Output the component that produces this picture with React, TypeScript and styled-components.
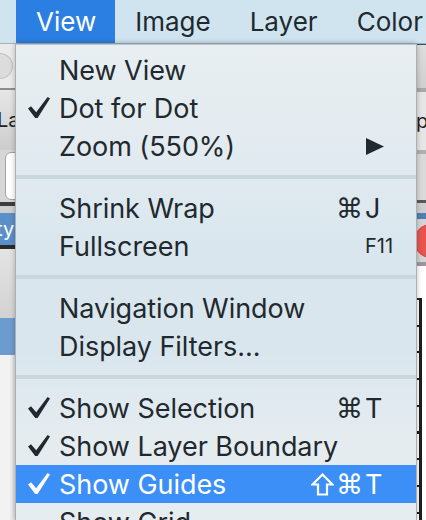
import React from "react";
import styled, { createGlobalStyle, css } from "styled-components";

const GlobalStyle = createGlobalStyle`
  html, body {
    margin: 0;
    padding: 0;
  }
  body {
    font-family: Inter, "Noto Sans", "DejaVu Sans", sans-serif;
    -webkit-font-smoothing: antialiased;
  }
`;

const Page = styled.div`
  width: 426px;
  height: 520px;
  overflow: hidden;
  display: flex;
  flex-direction: column;
  background: #e9e9e9;
`;

const MenuBar = styled.div`
  height: 43px;
  flex: none;
  display: flex;
  padding-left: 16px;
  background: #d0e4ef;
  border-bottom: 1px solid #9fb4c0;
`;

const BarItem = styled.div<{ $active?: boolean }>`
  display: flex;
  align-items: center;
  padding: 0 19px 0 20px;
  font-size: 26px;
  color: #1e2930;
  white-space: nowrap;
  ${(p) =>
    p.$active &&
    css`
      background: #2c7fe2;
      color: #ffffff;
    `}
`;

const Body = styled.div`
  flex: 1;
  display: flex;
  min-height: 0;
`;

const Edge = styled.div<{ $w: number }>`
  width: ${(p) => p.$w}px;
  flex: none;
  display: flex;
  flex-direction: column;
  overflow: hidden;
`;

const Band = styled.div<{ $h: number; $bg: string }>`
  height: ${(p) => p.$h}px;
  flex: none;
  background: ${(p) => p.$bg};
  display: flex;
  align-items: center;
  overflow: hidden;
`;

const FillBand = styled.div<{ $bg: string }>`
  flex: 1;
  background: ${(p) => p.$bg};
`;

const Light = styled.div<{ $color: string; $size: number; $offset: number }>`
  width: ${(p) => p.$size}px;
  height: ${(p) => p.$size}px;
  border-radius: 50%;
  flex: none;
  margin-left: ${(p) => p.$offset}px;
  background: ${(p) => p.$color};
  box-shadow: inset 0 0 0 1px rgba(0, 0, 0, 0.12);
`;

const EdgeText = styled.span<{ $color: string; $offset: number }>`
  font-size: 20px;
  color: ${(p) => p.$color};
  margin-left: ${(p) => p.$offset}px;
  white-space: nowrap;
`;

const FieldBox = styled.div`
  height: 46px;
  margin-left: 5px;
  width: 30px;
  flex: none;
  border: 1px solid #a3a3a3;
  border-radius: 6px;
  background: linear-gradient(90deg, #ffffff 0 9px, #c9a877 9px 11px, #ffffff 11px);
`;

const Ruler = styled.div`
  flex: 1;
  background-color: #ffffff;
  background-image: linear-gradient(#ffffff, #ffffff),
    linear-gradient(90deg, transparent 3px, #1e1e1e 3px 6px, transparent 6px),
    repeating-linear-gradient(180deg, #1e1e1e 0 2px, transparent 2px 26.7px);
  background-repeat: no-repeat;
  background-size: 10px 32px, 10px 100%, 4px 100%;
  background-position: 0 0, 0 32px, 0 32px;
`;

const Menu = styled.div`
  width: 400px;
  flex: none;
  position: relative;
  z-index: 1;
  padding-top: 6px;
  box-sizing: border-box;
  border-top: 1px solid #b9c6cd;
  background: linear-gradient(
    180deg,
    #e8eef1 0%,
    #e2ebf0 22%,
    #d9e6ee 45%,
    #dae6ee 65%,
    #e4ecf0 82%,
    #e6edf1 100%
  );
  box-shadow: -1px 0 0 #a9b1b5, 1px 0 0 #a9b1b5, 0 0 6px rgba(0, 0, 0, 0.35);
`;

const Row = styled.div<{ $selected?: boolean }>`
  height: 38px;
  display: flex;
  align-items: center;
  padding-left: 12px;
  font-size: 27px;
  color: #22292e;
  white-space: nowrap;
  ${(p) =>
    p.$selected &&
    css`
      background: #3b8ff6;
      color: #ffffff;
    `}
`;

const CheckCol = styled.span`
  width: 31px;
  flex: none;
  display: flex;
  align-items: center;
`;

const Label = styled.span`
  flex: 1;
  letter-spacing: -0.05px;
`;

const Mods = styled.span`
  flex: none;
  display: flex;
  align-items: center;
  gap: 2px;
  font-family: "DejaVu Sans", sans-serif;
  font-size: 27px;
`;

const Key = styled.span<{ $small?: boolean }>`
  width: 32px;
  flex: none;
  margin-left: 2px;
  margin-right: 19px;
  display: flex;
  align-items: center;
  font-size: ${(p) => (p.$small ? 20 : 27)}px;
  padding-left: ${(p) => (p.$small ? 2 : 0)}px;
`;

const Separator = styled.div`
  height: 4px;
  margin: 10px 0;
  background: #cbd7de;
`;

const Check = () => (
  <svg width="22" height="22" viewBox="0 0 22 22">
    <polygon points="0,11.5 3,9.2 8.2,15.2 19.6,0 22,1.6 9.6,21 7.2,21" fill="currentColor" />
  </svg>
);

const Arrow = () => (
  <svg width="19" height="19" viewBox="0 0 19 19" style={{ marginLeft: 1 }}>
    <polygon points="0,1 18,9.5 0,18" fill="currentColor" />
  </svg>
);

const ShiftIcon = () => (
  <svg width="23" height="23" viewBox="0 0 23 23">
    <polygon
      points="11.5,1.5 21.5,11.5 16,11.5 16,21.5 7,21.5 7,11.5 1.5,11.5"
      fill="none"
      stroke="currentColor"
      strokeWidth="2.2"
      strokeLinejoin="miter"
    />
  </svg>
);

type Item = {
  label: string;
  checked?: boolean;
  shift?: boolean;
  cmd?: boolean;
  keyChar?: string;
  fkey?: string;
  submenu?: boolean;
  selected?: boolean;
};

const groups: Item[][] = [
  [
    { label: "New View" },
    { label: "Dot for Dot", checked: true },
    { label: "Zoom (550%)", submenu: true },
  ],
  [
    { label: "Shrink Wrap", cmd: true, keyChar: "J" },
    { label: "Fullscreen", fkey: "F11" },
  ],
  [{ label: "Navigation Window" }, { label: "Display Filters..." }],
  [
    { label: "Show Selection", checked: true, cmd: true, keyChar: "T" },
    { label: "Show Layer Boundary", checked: true },
    { label: "Show Guides", checked: true, shift: true, cmd: true, keyChar: "T", selected: true },
    { label: "Show Grid" },
  ],
];

const MenuRow = ({ item }: { item: Item }) => (
  <Row $selected={item.selected}>
    <CheckCol>{item.checked && <Check />}</CheckCol>
    <Label>{item.label}</Label>
    <Mods>
      {item.shift && <ShiftIcon />}
      {item.cmd && "⌘"}
    </Mods>
    <Key $small={!!item.fkey}>
      {item.keyChar}
      {item.fkey}
      {item.submenu && <Arrow />}
    </Key>
  </Row>
);

const App = () => {
  return (
    <>
      <GlobalStyle />
      <Page>
        <MenuBar>
          <BarItem $active>View</BarItem>
          <BarItem>Image</BarItem>
          <BarItem>Layer</BarItem>
          <BarItem>Color</BarItem>
        </MenuBar>
        <Body>
          <Edge $w={16}>
            <Band $h={44} $bg="#ebebeb">
              <Light $color="#dcdcdc" $size={26} $offset={-13} />
            </Band>
            <Band $h={2} $bg="#8d8d8d" />
            <Band $h={60} $bg="linear-gradient(180deg, #e6e6e6, #cdcdcd)">
              <EdgeText $color="#222" $offset={-3}>
                Lay
              </EdgeText>
            </Band>
            <Band $h={52} $bg="#d6d6d6">
              <FieldBox />
            </Band>
            <Band $h={4} $bg="#3d3d3d" />
            <Band $h={7} $bg="#cfcfcf" />
            <Band $h={32} $bg="#5b8fca">
              <EdgeText $color="#ffffff" $offset={-4}>
                ty
              </EdgeText>
            </Band>
            <Band $h={4} $bg="#2a2a2a" />
            <Band $h={69} $bg="linear-gradient(180deg, #e4e4e4, #d2d2d2)" />
            <Band $h={37} $bg="#6c9bce" />
            <FillBand $bg="linear-gradient(90deg, #f2f2f2 60%, #d9d9d9)" />
          </Edge>
          <Menu>
            {groups.map((g, gi) => (
              <React.Fragment key={gi}>
                {gi > 0 && <Separator />}
                {g.map((item) => (
                  <MenuRow key={item.label} item={item} />
                ))}
              </React.Fragment>
            ))}
          </Menu>
          <Edge $w={10}>
            <Band $h={44} $bg="linear-gradient(180deg, #2f5168 0 1px, #dedede 1px, #cfcfcf)" />
            <Band $h={4} $bg="#a8a8a8" />
            <Band $h={58} $bg="#e6e6e6">
              <EdgeText $color="#222" $offset={0}>
                p
              </EdgeText>
            </Band>
            <Band $h={4} $bg="#b0b0b0" />
            <Band $h={46} $bg="#dadada" />
            <Band $h={3} $bg="#5a5a5a" />
            <Band $h={10} $bg="#cfcfcf" />
            <Band $h={6} $bg="#4f7fb4" />
            <Band $h={43} $bg="#d4d4d4">
              <Light $color="#e9544f" $size={34} $offset={-2} />
            </Band>
            <Band $h={4} $bg="#9a9a9a" />
            <Ruler />
          </Edge>
        </Body>
      </Page>
    </>
  );
};

export default App;
